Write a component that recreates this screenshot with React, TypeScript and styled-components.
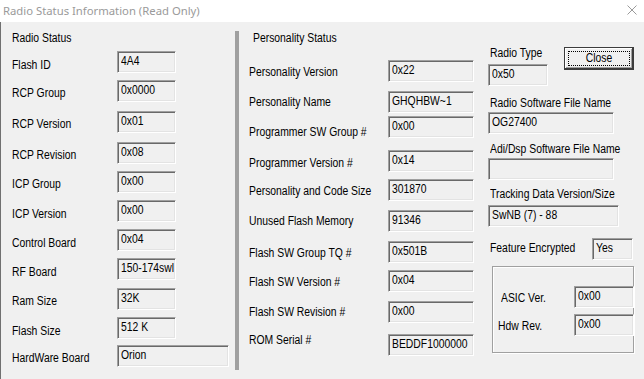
import React, { FC, ReactNode } from 'react';
import styled, { createGlobalStyle } from 'styled-components';

// no narrow face is installed, so the dialog font is squeezed horizontally
const uiFont = `"Liberation Sans", Arial, sans-serif`;

const GlobalStyle = createGlobalStyle`
    html, body {
        margin: 0;
        padding: 0;
        background: #f0f0f0;
    }
`;

const Window = styled.div`
    display: flex;
    flex-direction: column;
    width: 644px;
    height: 379px;
    overflow: hidden;
    font-family: ${uiFont};
    font-size: 12.5px;
    color: #000000;
`;

const TitleBar = styled.div`
    display: flex;
    flex-direction: row;
    justify-content: space-between;
    align-items: center;
    height: 22px;
    background: #ffffff;
    padding: 0 7px 2px 3px;
    box-sizing: border-box;
`;

const Title = styled.span`
    font-family: 'Noto Sans', 'Open Sans', sans-serif;
    font-size: 11.3px;
    color: #9a9a9a;
`;

const Narrow = styled.span<{ $center?: boolean }>`
    display: inline-block;
    white-space: nowrap;
    transform: scaleX(0.83);
    transform-origin: ${(p) => (p.$center ? 'center' : 'left')} center;
`;

const Body = styled.div`
    display: flex;
    flex-direction: row;
    align-items: flex-start;
    flex: 1;
    background: #f0f0f0;
    border-left: 1px solid #707070;
`;

const Column = styled.div<{ $pad: number }>`
    display: flex;
    flex-direction: column;
    padding-top: 9px;
    padding-left: ${(p) => p.$pad}px;
`;

const Heading = styled.div<{ $indent?: number }>`
    line-height: 14px;
    margin-left: ${(p) => p.$indent || 0}px;
`;

const FieldRow = styled.div<{ $gap: number }>`
    display: flex;
    flex-direction: row;
    align-items: flex-start;
    margin-top: ${(p) => p.$gap}px;
`;

const FieldLabel = styled.span<{ $width: number; $dy: number; $indent?: number }>`
    width: ${(p) => p.$width}px;
    margin-top: ${(p) => p.$dy}px;
    margin-left: ${(p) => p.$indent || 0}px;
    line-height: 15px;
    white-space: nowrap;
`;

const Box = styled.div<{ $width: number }>`
    width: ${(p) => p.$width}px;
    height: 22px;
    box-sizing: border-box;
    padding: 2px 0 0 3px;
    line-height: 15px;
    background: #f0f0f0;
    border: 1px solid;
    border-color: #a0a0a0 #ffffff #ffffff #a0a0a0;
    box-shadow: inset 1px 1px 0 #696969, inset -1px -1px 0 #e3e3e3;
    white-space: nowrap;
    overflow: hidden;
`;

const Divider = styled.div`
    width: 4px;
    height: 339px;
    margin: 9px 0 0 6px;
    background: #a0a0a0;
`;

const SideColumn = styled.div`
    display: flex;
    flex-direction: column;
    width: 146px;
    margin-left: 14px;
    padding-top: 24px;
`;

const TopRow = styled.div`
    display: flex;
    flex-direction: row;
    align-items: flex-start;
`;

const Stack = styled.div`
    display: flex;
    flex-direction: column;
`;

const SideLabel = styled.span<{ $gap: number }>`
    margin: ${(p) => p.$gap}px 0 0 2px;
    line-height: 15px;
    white-space: nowrap;
`;

const Spaced = styled.div<{ $gap: number }>`
    margin-top: ${(p) => p.$gap}px;
`;

const CloseButton = styled.button`
    width: 74px;
    height: 23px;
    margin: 1px 0 0 11px;
    padding: 0 0 1px 0;
    font-family: ${uiFont};
    font-size: 12.5px;
    color: #000000;
    background: #f0f0f0;
    border: 1px solid #3c3c3c;
    border-right-width: 2px;
    border-bottom-width: 2px;
    box-shadow: inset 1px 1px 0 #ffffff, inset -1px -1px 0 #a0a0a0;
    outline: 1px dotted #000000;
    outline-offset: -5px;
    cursor: pointer;
`;

const GroupFrame = styled.div`
    display: flex;
    flex-direction: column;
    width: 142px;
    height: 87px;
    box-sizing: border-box;
    margin: 6px 0 0 4px;
    padding-top: 19px;
    border: 1px solid #a0a0a0;
    box-shadow: inset 1px 1px 0 #ffffff, 1px 1px 0 #ffffff;
`;

const GroupRow = styled.div<{ $gap: number }>`
    display: flex;
    flex-direction: row;
    align-items: flex-start;
    margin-top: ${(p) => p.$gap}px;
    margin-right: -1px;
`;

const GroupLabel = styled.span<{ $indent: number }>`
    margin: 5px auto 0 ${(p) => p.$indent}px;
    line-height: 15px;
`;

type Field = { label: string; value: string; gap: number; dy: number; width?: number };

const radioFields: Field[] = [
    { label: 'Flash ID', value: '4A4', gap: 6, dy: 7 },
    { label: 'RCP Group', value: '0x0000', gap: 7, dy: 6 },
    { label: 'RCP Version', value: '0x01', gap: 9, dy: 6 },
    { label: 'RCP Revision', value: '0x08', gap: 9, dy: 6 },
    { label: 'ICP Group', value: '0x00', gap: 7, dy: 6 },
    { label: 'ICP Version', value: '0x00', gap: 7, dy: 7 },
    { label: 'Control Board', value: '0x04', gap: 7, dy: 7 },
    { label: 'RF Board', value: '150-174swl', gap: 7, dy: 7 },
    { label: 'Ram Size', value: '32K', gap: 8, dy: 6 },
    { label: 'Flash Size', value: '512 K', gap: 7, dy: 7 },
    { label: 'HardWare Board', value: 'Orion', gap: 6, dy: 6, width: 112 },
];

const personalityFields: Field[] = [
    { label: 'Personality Version', value: '0x22', gap: 15, dy: 5 },
    { label: 'Personality Name', value: 'GHQHBW~1', gap: 9, dy: 4 },
    { label: 'Programmer SW Group #', value: '0x00', gap: 3, dy: 9 },
    { label: 'Programmer Version #', value: '0x14', gap: 10, dy: 6 },
    { label: 'Personality and Code Size', value: '301870', gap: 7, dy: 5 },
    { label: 'Unused Flash Memory', value: '91346', gap: 9, dy: 4 },
    { label: 'Flash SW Group TQ #', value: '0x501B', gap: 9, dy: 5 },
    { label: 'Flash SW Version #', value: '0x04', gap: 7, dy: 5 },
    { label: 'Flash SW Revision #', value: '0x00', gap: 9, dy: 4 },
    { label: 'ROM Serial #', value: 'BEDDF1000000', gap: 11, dy: -1 },
];

const CloseGlyph = () => (
    <svg width="10" height="10" viewBox="0 0 10 10">
        <path d="M0.5 0.5 L9.5 9.5 M9.5 0.5 L0.5 9.5" stroke="#9a9a9a" strokeWidth="1" fill="none" />
    </svg>
);

const ValueBox: FC<{ width: number; children?: ReactNode }> = ({ width, children }) => (
    <Box $width={width}>{children ? <Narrow>{children}</Narrow> : null}</Box>
);

const FieldList: FC<{ fields: Field[]; labelWidth: number; boxWidth: number }> = ({ fields, labelWidth, boxWidth }) => (
    <>
        {fields.map((f) => (
            <FieldRow key={f.label} $gap={f.gap}>
                <FieldLabel $width={labelWidth} $dy={f.dy}>
                    <Narrow>{f.label}</Narrow>
                </FieldLabel>
                <ValueBox width={f.width || boxWidth}>{f.value}</ValueBox>
            </FieldRow>
        ))}
    </>
);

const App: FC = () => (
    <>
        <GlobalStyle />
        <Window>
            <TitleBar>
                <Title>Radio Status Information (Read Only)</Title>
                <CloseGlyph />
            </TitleBar>
            <Body>
                <Column $pad={11}>
                    <Heading>
                        <Narrow>Radio Status</Narrow>
                    </Heading>
                    <FieldList fields={radioFields} labelWidth={105} boxWidth={59} />
                </Column>
                <Divider />
                <Column $pad={10}>
                    <Heading $indent={4}>
                        <Narrow>Personality Status</Narrow>
                    </Heading>
                    <FieldList fields={personalityFields} labelWidth={139} boxWidth={86} />
                </Column>
                <SideColumn>
                    <TopRow>
                        <Stack>
                            <SideLabel $gap={0}>
                                <Narrow>Radio Type</Narrow>
                            </SideLabel>
                            <Spaced $gap={3}>
                                <ValueBox width={60}>0x50</ValueBox>
                            </Spaced>
                        </Stack>
                        <CloseButton type="button">
                            <Narrow $center>Close</Narrow>
                        </CloseButton>
                    </TopRow>
                    <SideLabel $gap={10}>
                        <Narrow>Radio Software File Name</Narrow>
                    </SideLabel>
                    <Spaced $gap={1}>
                        <ValueBox width={126}>OG27400</ValueBox>
                    </Spaced>
                    <SideLabel $gap={8}>
                        <Narrow>Adi/Dsp Software File Name</Narrow>
                    </SideLabel>
                    <Spaced $gap={1}>
                        <ValueBox width={126} />
                    </Spaced>
                    <SideLabel $gap={7}>
                        <Narrow>Tracking Data Version/Size</Narrow>
                    </SideLabel>
                    <Spaced $gap={3}>
                        <ValueBox width={131}>SwNB (7) - 88</ValueBox>
                    </Spaced>
                    <FieldRow $gap={11}>
                        <FieldLabel $width={102} $dy={3} $indent={2}>
                            <Narrow>Feature Encrypted</Narrow>
                        </FieldLabel>
                        <ValueBox width={41}>Yes</ValueBox>
                    </FieldRow>
                    <GroupFrame>
                        <GroupRow $gap={0}>
                            <GroupLabel $indent={8}>
                                <Narrow>ASIC Ver.</Narrow>
                            </GroupLabel>
                            <ValueBox width={60}>0x00</ValueBox>
                        </GroupRow>
                        <GroupRow $gap={6}>
                            <GroupLabel $indent={5}>
                                <Narrow>Hdw Rev.</Narrow>
                            </GroupLabel>
                            <ValueBox width={60}>0x00</ValueBox>
                        </GroupRow>
                    </GroupFrame>
                </SideColumn>
            </Body>
        </Window>
    </>
);

export default App;
